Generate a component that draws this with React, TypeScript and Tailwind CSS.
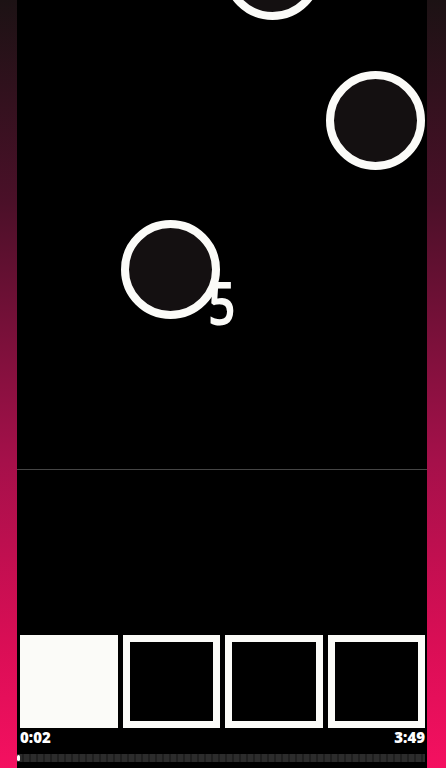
import React from 'react';

// playfield circles, positions relative to the center column
const circles = [
    { id: 1, left: 'left-[206px]', top: 'top-[-79px]' },
    { id: 2, left: 'left-[309px]', top: 'top-[71px]' },
    { id: 3, left: 'left-[104px]', top: 'top-[220px]' },
];

export default function App() {
    const side = "bg-[linear-gradient(to_bottom,#1c1214_0%,#4a1028_26%,#a5104a_60%,#d80e55_83%,#f41060_100%)]";

    return (
        <div className="flex h-[768px] w-[446px] overflow-hidden bg-black font-['Lato','DejaVu_Sans',sans-serif]">
            {/* Left strip */}
            <div className={`w-[17px] shrink-0 ${side}`} />

            {/* Game column */}
            <div className="flex w-[410px] shrink-0 flex-col bg-black">
                {/* Playfield */}
                <div className="relative h-[470px] shrink-0 overflow-hidden border-b border-[#454545]">
                    {circles.map(c => (
                        <div
                            key={c.id}
                            className={`absolute ${c.left} ${c.top} h-[99px] w-[99px] rounded-full border-[8px] border-[#fbfbf8] bg-[#141011]`}
                        />
                    ))}
                    <span className="absolute left-[191px] top-[273px] origin-left scale-x-[0.82] font-['Noto_Sans',sans-serif] text-[59px] font-semibold leading-none text-[#fbfbf8]">
                        5
                    </span>
                </div>

                <div className="flex-1" />

                {/* Tiles */}
                <div className="flex h-[93px] gap-[5px] pl-[3px]">
                    <div className="w-[98px] bg-[#fbfbf8]" />
                    <div className="w-[97px] border-[7px] border-[#fbfbf8] bg-black" />
                    <div className="w-[98px] border-[7px] border-[#fbfbf8] bg-black" />
                    <div className="w-[97px] border-[7px] border-[#fbfbf8] bg-black" />
                </div>

                {/* Times */}
                <div className="flex h-[19px] items-center justify-between pl-[3px] pr-[2px] font-['Open_Sans',sans-serif] text-[15px] font-extrabold leading-none text-white">
                    <span>0:02</span>
                    <span>3:49</span>
                </div>

                {/* Progress */}
                <div className="flex h-[21px] items-center pr-[2px]">
                    <div className="relative h-[8px] flex-1 bg-[repeating-linear-gradient(to_right,#2c2c2c_0px,#2c2c2c_5px,#1f1f1f_5px,#1f1f1f_7px)]">
                        <div className="absolute left-0 top-[1px] h-[6px] w-[3px] rounded-full bg-white" />
                    </div>
                </div>
            </div>

            {/* Right strip */}
            <div className={`flex-1 ${side}`} />
        </div>
    );
}
